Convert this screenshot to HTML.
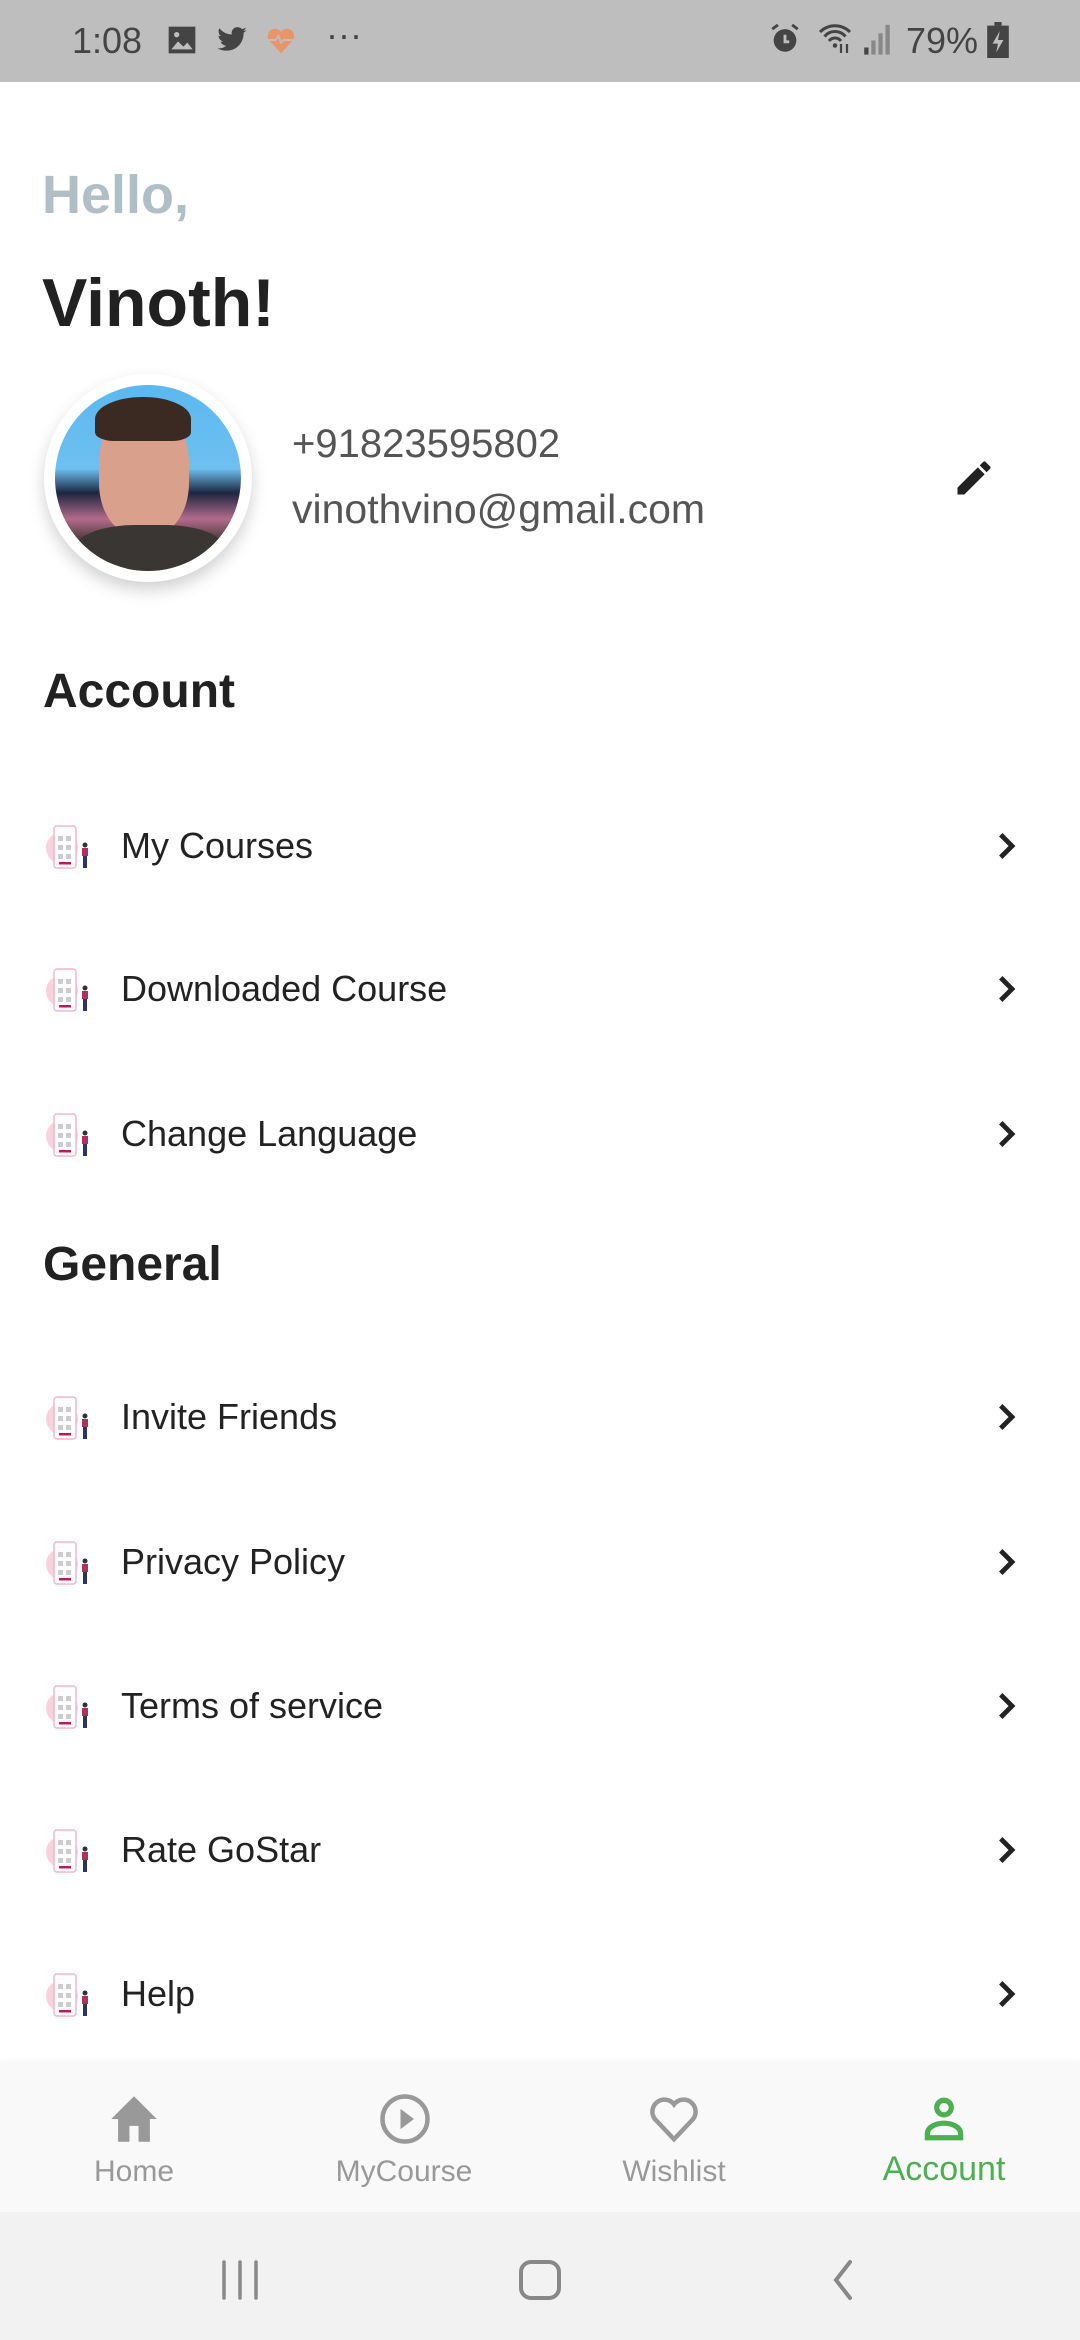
<!DOCTYPE html>
<html><head><meta charset="utf-8"><style>
*{margin:0;padding:0;box-sizing:border-box}
body{width:1080px;height:2340px;background:#fff;font-family:"Liberation Sans",sans-serif;position:relative;overflow:hidden;color:#212121}
.abs{position:absolute}
.sb{left:0;top:0;width:1080px;height:82px;background:#bebebe}
.sbt{font-size:36px;color:#444;top:20px}
.item{position:absolute;left:0;width:1080px;height:80px}
.item .ic{position:absolute;left:44px;top:16px;width:50px;height:50px}
.item .t{position:absolute;left:121px;top:19px;font-size:36px;color:#222}
.item .ch{position:absolute;left:988px;top:22px}
.h{position:absolute;left:43px;font-size:48px;font-weight:bold;color:#212121}
.nl{position:absolute;top:2155px;font-size:30px;color:#999;width:200px;text-align:center}
</style></head><body>
<div class="abs sb"></div>
<div class="abs sbt" style="left:72px">1:08</div>
<svg class="abs" style="left:166px;top:24px" width="32" height="32" viewBox="0 0 24 24"><rect x="2" y="2" width="20" height="20" fill="#444"/><path d="M4 19l5-6 4 4 3-3 4 5z" fill="#bebebe"/><circle cx="8" cy="8" r="2" fill="#bebebe"/></svg>
<svg class="abs" style="left:214px;top:24px" width="36" height="32" viewBox="0 0 24 24"><path fill="#444" d="M23 4.5a9 9 0 0 1-2.6.7 4.5 4.5 0 0 0 2-2.5 9 9 0 0 1-2.9 1.1A4.5 4.5 0 0 0 11.8 7.9 12.8 12.8 0 0 1 2.5 3.2a4.5 4.5 0 0 0 1.4 6 4.5 4.5 0 0 1-2-.6 4.5 4.5 0 0 0 3.6 4.5 4.5 4.5 0 0 1-2 .1 4.5 4.5 0 0 0 4.2 3.1A9 9 0 0 1 1 18.2 12.8 12.8 0 0 0 7.9 20c8.3 0 12.8-6.9 12.8-12.8v-.6A9 9 0 0 0 23 4.5z"/></svg>
<svg class="abs" style="left:265px;top:24px" width="32" height="32" viewBox="0 0 24 24"><path fill="#e8956a" d="M12 22L3 12a5 5 0 0 1 9-6 5 5 0 0 1 9 6z"/><path d="M3 12h5l2-3 2 5 2-2h7" stroke="#bebebe" stroke-width="1.5" fill="none"/></svg>
<div class="abs sbt" style="left:326px;top:14px">···</div>
<svg class="abs" style="left:768px;top:22px" width="34" height="34" viewBox="0 0 24 24"><circle cx="12" cy="13" r="8" fill="#444"/><path d="M12 9v5h3" stroke="#bebebe" stroke-width="2" fill="none"/><path d="M3 5l4-3M21 5l-4-3" stroke="#444" stroke-width="2"/></svg>
<svg class="abs" style="left:815px;top:20px" width="40" height="36" viewBox="0 0 24 24"><path d="M2 8a14 14 0 0 1 20 0M5 11a9 9 0 0 1 14 0M8 14a5 5 0 0 1 8 0" stroke="#444" stroke-width="2" fill="none"/><circle cx="12" cy="17" r="1.5" fill="#444"/><path d="M16 16v6M20 16v6" stroke="#444" stroke-width="1.5"/></svg>
<svg class="abs" style="left:862px;top:22px" width="30" height="34" viewBox="0 0 20 24"><rect x="1" y="18" width="3" height="5" fill="#444"/><rect x="6" y="13" width="3" height="10" fill="#888"/><rect x="11" y="8" width="3" height="15" fill="#888"/><rect x="16" y="2" width="3" height="21" fill="#888"/></svg>
<div class="abs sbt" style="left:906px">79%</div>
<svg class="abs" style="left:987px;top:22px" width="22" height="36" viewBox="0 0 12 20"><rect x="4" y="0" width="4" height="2" fill="#444"/><rect x="0" y="2" width="12" height="18" fill="#444"/><path d="M7 5l-4 7h3l-1 5 4-7H6z" fill="#bebebe"/></svg>

<div class="abs" style="left:42px;top:164px;font-size:54px;font-weight:bold;color:#b0bec5">Hello,</div>
<div class="abs" style="left:42px;top:264px;font-size:68px;font-weight:bold;color:#212121">Vinoth!</div>

<div class="abs" style="left:44px;top:374px;width:208px;height:208px;border-radius:50%;background:#fff;box-shadow:0 8px 16px rgba(0,0,0,0.18)"></div>
<div class="abs" style="left:55px;top:385px;width:186px;height:186px;border-radius:50%;overflow:hidden;background:linear-gradient(180deg,#5bb8ef 0%,#6ec0f0 45%,#1c2640 58%,#b36a8a 72%,#3a3330 85%)">
<div class="abs" style="left:44px;top:20px;width:90px;height:130px;border-radius:45% 45% 40% 40%;background:#d9a08b"></div>
<div class="abs" style="left:40px;top:12px;width:96px;height:44px;border-radius:50% 50% 20% 20%;background:#3b2a22"></div>
<div class="abs" style="left:20px;top:140px;width:150px;height:60px;border-radius:40%;background:#3a3633"></div>
</div>

<div class="abs" style="left:292px;top:422px;font-size:40px;color:#555">+91823595802</div>
<div class="abs" style="left:292px;top:486px;font-size:41px;color:#555">vinothvino@gmail.com</div>
<svg class="abs" style="left:952px;top:456px" width="44" height="44" viewBox="0 0 24 24"><path fill="#222" d="M3 17.25V21h3.75L17.81 9.94l-3.75-3.75L3 17.25zM20.71 7.04a1 1 0 0 0 0-1.41l-2.34-2.34a1 1 0 0 0-1.41 0l-1.83 1.83 3.75 3.75 1.83-1.83z"/></svg>

<div class="h" style="top:664px">Account</div>
<div class="h" style="top:1237px">General</div>

<svg width="0" height="0" style="position:absolute"><defs>
<g id="ic"><circle cx="18" cy="26" r="16" fill="#f8d3dd"/><rect x="10" y="4" width="22" height="42" rx="3" fill="#fff" stroke="#f3b6c7" stroke-width="1.5"/><rect x="14" y="14" width="5" height="5" fill="#ccc"/><rect x="22" y="14" width="5" height="5" fill="#ccc"/><rect x="14" y="23" width="5" height="5" fill="#ccc"/><rect x="22" y="23" width="5" height="5" fill="#ccc"/><rect x="14" y="32" width="5" height="5" fill="#ccc"/><rect x="22" y="32" width="5" height="5" fill="#ccc"/><rect x="15" y="40" width="12" height="2.5" fill="#c2185b"/><rect x="38" y="26" width="6" height="8" fill="#b03060"/><rect x="39" y="34" width="4" height="12" fill="#2a3560"/><circle cx="41" cy="23" r="2.5" fill="#333"/></g>
<path id="ch" d="M8.5 4.5l7.5 7.5-7.5 7.5" stroke="#222" stroke-width="3.2" fill="none"/>
</defs></svg>

<div class="item" style="top:806px"><svg class="ic" viewBox="0 0 50 50"><use href="#ic"/></svg><div class="t">My Courses</div><svg class="ch" width="36" height="36" viewBox="0 0 24 24"><use href="#ch"/></svg></div>
<div class="item" style="top:949px"><svg class="ic" viewBox="0 0 50 50"><use href="#ic"/></svg><div class="t">Downloaded Course</div><svg class="ch" width="36" height="36" viewBox="0 0 24 24"><use href="#ch"/></svg></div>
<div class="item" style="top:1094px"><svg class="ic" viewBox="0 0 50 50"><use href="#ic"/></svg><div class="t">Change Language</div><svg class="ch" width="36" height="36" viewBox="0 0 24 24"><use href="#ch"/></svg></div>
<div class="item" style="top:1377px"><svg class="ic" viewBox="0 0 50 50"><use href="#ic"/></svg><div class="t">Invite Friends</div><svg class="ch" width="36" height="36" viewBox="0 0 24 24"><use href="#ch"/></svg></div>
<div class="item" style="top:1522px"><svg class="ic" viewBox="0 0 50 50"><use href="#ic"/></svg><div class="t">Privacy Policy</div><svg class="ch" width="36" height="36" viewBox="0 0 24 24"><use href="#ch"/></svg></div>
<div class="item" style="top:1666px"><svg class="ic" viewBox="0 0 50 50"><use href="#ic"/></svg><div class="t">Terms of service</div><svg class="ch" width="36" height="36" viewBox="0 0 24 24"><use href="#ch"/></svg></div>
<div class="item" style="top:1810px"><svg class="ic" viewBox="0 0 50 50"><use href="#ic"/></svg><div class="t">Rate GoStar</div><svg class="ch" width="36" height="36" viewBox="0 0 24 24"><use href="#ch"/></svg></div>
<div class="item" style="top:1954px"><svg class="ic" viewBox="0 0 50 50"><use href="#ic"/></svg><div class="t">Help</div><svg class="ch" width="36" height="36" viewBox="0 0 24 24"><use href="#ch"/></svg></div>

<div class="abs" style="left:0;top:2063px;width:1080px;height:149px;background:#f9f9f9;box-shadow:0 -2px 6px rgba(0,0,0,0.04)"></div>
<svg class="abs" style="left:106px;top:2094px" width="56" height="50" viewBox="0 0 24 22"><path fill="#999" d="M12 1L2 11h3v10h5v-7h4v7h5V11h3z"/></svg>
<svg class="abs" style="left:378px;top:2092px" width="54" height="54" viewBox="0 0 24 24"><circle cx="12" cy="12" r="10" stroke="#999" stroke-width="2" fill="none"/><path d="M10 7.5v9l6-4.5z" fill="#999"/></svg>
<svg class="abs" style="left:647px;top:2094px" width="54" height="50" viewBox="0 0 24 22"><path d="M12 20L3.5 11A5 5 0 0 1 12 4.5 5 5 0 0 1 20.5 11z" stroke="#999" stroke-width="2" fill="none"/></svg>
<svg class="abs" style="left:919px;top:2094px" width="50" height="50" viewBox="0 0 24 24"><circle cx="12" cy="6.5" r="3.5" stroke="#4caf50" stroke-width="2.5" fill="none"/><path d="M4 21v-2c0-3 4-5 8-5s8 2 8 5v2z" stroke="#4caf50" stroke-width="2.5" fill="none"/></svg>
<div class="nl" style="left:34px">Home</div>
<div class="nl" style="left:304px">MyCourse</div>
<div class="nl" style="left:574px">Wishlist</div>
<div class="nl" style="left:844px;top:2150px;font-size:34px;color:#4caf50">Account</div>

<div class="abs" style="left:0;top:2212px;width:1080px;height:128px;background:#f2f2f2"></div>
<svg class="abs" style="left:218px;top:2260px" width="44" height="40" viewBox="0 0 44 40"><path d="M6 2v36M22 2v36M38 2v36" stroke="#888" stroke-width="3.5" stroke-linecap="round"/></svg>
<svg class="abs" style="left:518px;top:2260px" width="44" height="40" viewBox="0 0 44 40"><rect x="3" y="2" width="38" height="36" rx="10" stroke="#888" stroke-width="4" fill="none"/></svg>
<svg class="abs" style="left:828px;top:2258px" width="30" height="44" viewBox="0 0 30 44"><path d="M22 4L8 22l14 18" stroke="#888" stroke-width="4" fill="none" stroke-linecap="round"/></svg>
</body></html>
